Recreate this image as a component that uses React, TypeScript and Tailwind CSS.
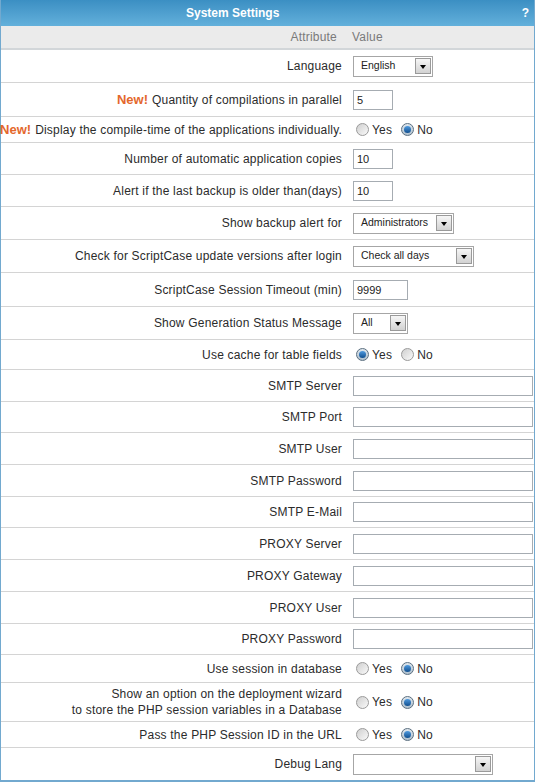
import type { ReactNode } from "react";

type Control =
  | { kind: "select"; value: string; width: string }
  | { kind: "text"; value?: string; width: string }
  | { kind: "radio"; yes: boolean };

type Row = { label: ReactNode; control: Control; h: string };

function New() {
  return <span className="text-[13px] font-bold text-[#e4682c] mr-[4px] tracking-normal">New!</span>;
}

const rows: Row[] = [
  { label: "Language", control: { kind: "select", value: "English", width: "w-[80px]" }, h: "h-[33px]" },
  {
    label: (
      <>
        <New />
        Quantity of compilations in parallel
      </>
    ),
    control: { kind: "text", value: "5", width: "w-[40px]" },
    h: "h-[34px]",
  },
  {
    label: (
      <>
        <New />
        Display the compile-time of the applications individually.
      </>
    ),
    control: { kind: "radio", yes: false },
    h: "h-[26px]",
  },
  { label: "Number of automatic application copies", control: { kind: "text", value: "10", width: "w-[40px]" }, h: "h-[32px]" },
  { label: "Alert if the last backup is older than(days)", control: { kind: "text", value: "10", width: "w-[40px]" }, h: "h-[32px]" },
  { label: "Show backup alert for", control: { kind: "select", value: "Administrators", width: "w-[101px]" }, h: "h-[33px]" },
  { label: "Check for ScriptCase update versions after login", control: { kind: "select", value: "Check all days", width: "w-[121px]" }, h: "h-[33px]" },
  { label: "ScriptCase Session Timeout (min)", control: { kind: "text", value: "9999", width: "w-[55px]" }, h: "h-[34px]" },
  { label: "Show Generation Status Message", control: { kind: "select", value: "All", width: "w-[55px]" }, h: "h-[33px]" },
  { label: "Use cache for table fields", control: { kind: "radio", yes: true }, h: "h-[30px]" },
  { label: "SMTP Server", control: { kind: "text", width: "w-[180px]" }, h: "h-[32px]" },
  { label: "SMTP Port", control: { kind: "text", width: "w-[180px]" }, h: "h-[31px]" },
  { label: "SMTP User", control: { kind: "text", width: "w-[180px]" }, h: "h-[32px]" },
  { label: "SMTP Password", control: { kind: "text", width: "w-[180px]" }, h: "h-[32px]" },
  { label: "SMTP E-Mail", control: { kind: "text", width: "w-[180px]" }, h: "h-[31px]" },
  { label: "PROXY Server", control: { kind: "text", width: "w-[180px]" }, h: "h-[32px]" },
  { label: "PROXY Gateway", control: { kind: "text", width: "w-[180px]" }, h: "h-[32px]" },
  { label: "PROXY User", control: { kind: "text", width: "w-[180px]" }, h: "h-[32px]" },
  { label: "PROXY Password", control: { kind: "text", width: "w-[180px]" }, h: "h-[31px]" },
  { label: "Use session in database", control: { kind: "radio", yes: false }, h: "h-[28px]" },
  {
    label: (
      <>
        Show an option on the deployment wizard
        <br />
        to store the PHP session variables in a Database
      </>
    ),
    control: { kind: "radio", yes: false },
    h: "h-[39px]",
  },
  { label: "Pass the PHP Session ID in the URL", control: { kind: "radio", yes: false }, h: "h-[26px]" },
  { label: "Debug Lang", control: { kind: "select", value: "", width: "w-[140px]" }, h: "h-[32px]" },
];

function Radio({ checked }: { checked: boolean }) {
  return checked ? (
    <span className="w-[13px] h-[13px] rounded-full border border-[#5b6f80] bg-gradient-to-b from-[#dfe7ee] to-[#aebfcd] flex items-center justify-center">
      <span className="w-[7px] h-[7px] rounded-full bg-gradient-to-b from-[#4f9be0] to-[#0f4f8f]" />
    </span>
  ) : (
    <span className="w-[13px] h-[13px] rounded-full border border-[#9a9a9a] bg-gradient-to-br from-[#cfcfcf] to-[#fafafa]" />
  );
}

function Field({ c }: { c: Control }) {
  if (c.kind === "radio") {
    return (
      <div className="flex items-center pl-[3px] tracking-[0.2px]">
        <Radio checked={c.yes} />
        <span className="ml-[3px] mr-[9px]">Yes</span>
        <Radio checked={!c.yes} />
        <span className="ml-[3px]">No</span>
      </div>
    );
  }
  if (c.kind === "select") {
    return (
      <div className={`${c.width} h-[21px] border border-[#a6a6a6] bg-white flex items-center justify-between pl-[7px] pr-[1px] text-[10.5px] text-[#222]`}>
        <span>{c.value}</span>
        <span className="w-[16px] h-[16px] border border-[#9a9a9a] bg-gradient-to-b from-[#f6f6f6] to-[#d2d2d2] flex items-center justify-center">
          <span className="w-0 h-0 border-l-[3px] border-r-[3px] border-t-[4px] border-l-transparent border-r-transparent border-t-black mt-[2px]" />
        </span>
      </div>
    );
  }
  return (
    <input
      readOnly
      defaultValue={c.value ?? ""}
      className={`${c.width} h-[20px] border border-[#a6acb2] bg-white px-[3px] text-[11px] text-[#222] outline-none`}
    />
  );
}

export default function App() {
  return (
    <div className="w-[536px] bg-white font-['Liberation_Sans',Arial,sans-serif] text-[12px] text-[#2b2b2b]">
      <div className="w-[535px] border-x border-b-2 border-[#72a9cf]">
        <div className="h-[26px] bg-gradient-to-b from-[#3b8fc3] to-[#63b0db] flex items-center text-white font-bold">
          <span className="pl-[185px] flex-1">System Settings</span>
          <span className="pr-[5px]">?</span>
        </div>
        <div className="h-[24px] bg-[#ebebeb] border-b-2 border-[#d2d6d9] flex items-center text-[#7a7a7a] tracking-[0.2px]">
          <div className="w-[346px] text-right pr-[10px]">Attribute</div>
          <div className="pl-[5px]">Value</div>
        </div>
        {rows.map((r, i) => (
          <div key={i} className={`${r.h} flex border-b border-[#d4d4d4] ${i === rows.length - 1 ? "border-b-0" : ""}`}>
            <div className="w-[346px] flex items-center justify-end pr-[5px]">
              <span className="whitespace-nowrap text-right leading-[16px] tracking-[0.2px]">{r.label}</span>
            </div>
            <div className="flex-1 flex items-center pl-[6px]">
              <Field c={r.control} />
            </div>
          </div>
        ))}
      </div>
    </div>
  );
}
